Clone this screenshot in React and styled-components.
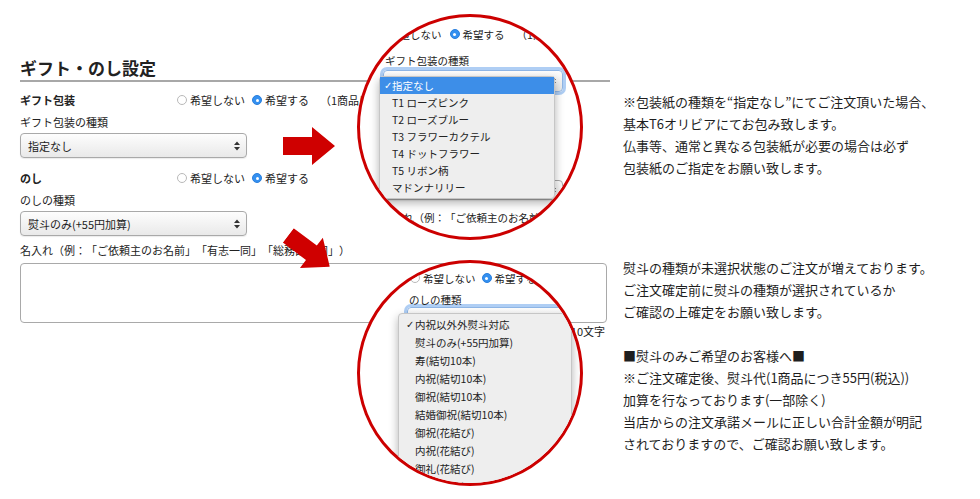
import styled, { createGlobalStyle } from "styled-components";

const GlobalStyle = createGlobalStyle`
  html, body {
    margin: 0;
    padding: 0;
    background: #fff;
  }
  body {
    width: 980px;
    height: 499px;
    overflow: hidden;
    font-family: "Noto Sans CJK JP", "Noto Sans", "DejaVu Sans", sans-serif;
    color: #222;
    text-spacing-trim: space-all;
  }
`;

const Page = styled.div`
  position: relative;
  width: 980px;
  height: 499px;
  display: flex;
  padding-left: 20px;
  box-sizing: border-box;
`;

const Form = styled.div`
  width: 590px;
  padding-top: 56px;
  font-size: 11px;
`;

const Title = styled.h2`
  margin: 0;
  font-size: 17px;
  font-weight: 700;
  line-height: 24px;
  border-bottom: 2px solid #a8a8a8;
`;

const OptionRow = styled.div`
  display: flex;
  align-items: center;
  height: ${(p) => p.$h || 20}px;
  margin-top: ${(p) => p.$mt || 0}px;
  margin-left: ${(p) => p.$ml || 0}px;
  white-space: nowrap;
`;

const RowLabel = styled.div`
  width: 157px;
  font-weight: 700;
`;

const RadioItem = styled.span`
  display: inline-flex;
  align-items: center;
  gap: 3px;
  margin-right: ${(p) => p.$gap || 7}px;
`;

const RadioDot = styled.span`
  position: relative;
  width: 10px;
  height: 10px;
  border-radius: 50%;
  box-sizing: border-box;
  border: 1px solid ${(p) => (p.$checked ? "#2a7fdc" : "#b9b9b9")};
  background: ${(p) => (p.$checked ? "#3490f0" : "#fff")};

  &::after {
    content: "";
    display: ${(p) => (p.$checked ? "block" : "none")};
    position: absolute;
    left: 2.5px;
    top: 2.5px;
    width: 3px;
    height: 3px;
    border-radius: 50%;
    background: #fff;
  }
`;

const PriceNote = styled.span`
  margin-left: 4px;
`;

const FieldLabel = styled.div`
  margin-top: ${(p) => p.$mt || 0}px;
  margin-left: ${(p) => p.$ml || 0}px;
  line-height: ${(p) => p.$lh || 16}px;
  white-space: nowrap;
`;

const SelectBox = styled.div`
  width: ${(p) => p.$w}px;
  height: ${(p) => p.$h || 25}px;
  margin-top: ${(p) => p.$mt || 0}px;
  margin-left: ${(p) => p.$ml || 0}px;
  box-sizing: border-box;
  border: 1px solid ${(p) => (p.$focus ? "#8fb6e6" : "#a9a9a9")};
  border-radius: 4px;
  background: linear-gradient(#fdfdfd, #e9e9e9);
  box-shadow: ${(p) =>
    p.$focus ? "0 0 0 3px rgba(110, 165, 235, 0.55)" : "0 1px 1px rgba(0, 0, 0, 0.08)"};
  display: flex;
  align-items: center;
  justify-content: space-between;
  padding: 0 6px 0 7px;
`;

const NameArea = styled.textarea`
  display: block;
  width: 587px;
  height: 60px;
  margin: 5px 0 0;
  box-sizing: border-box;
  border: 1px solid #a9a9a9;
  border-radius: 4px;
  resize: none;
  background: #fff;
`;

const Counter = styled.div`
  width: 587px;
  margin-top: 1px;
  padding-right: 2px;
  box-sizing: border-box;
  text-align: right;
  line-height: 14px;
`;

const Notes = styled.div`
  margin-left: 13px;
  padding-top: 91px;
  font-size: 13px;
  line-height: 22px;
  color: #1e1e1e;
  white-space: nowrap;
`;

const NoteBlock = styled.p`
  margin: 0 0 ${(p) => p.$mb || 0}px;
`;

const Lens = styled.div`
  position: absolute;
  left: ${(p) => p.$x}px;
  top: ${(p) => p.$y}px;
  width: 226px;
  height: 226px;
  box-sizing: border-box;
  border: 3px solid #cc0000;
  border-radius: 50%;
  overflow: hidden;
  background: #fff;
  font-size: 10.5px;
  color: #222;
`;

const Menu = styled.div`
  position: absolute;
  left: ${(p) => p.$x}px;
  top: ${(p) => p.$y}px;
  width: ${(p) => p.$w}px;
  box-sizing: border-box;
  padding: ${(p) => p.$pad || 0}px 0 2px;
  background: #eeeeee;
  border: 1px solid #c6c6c6;
  border-radius: 4px;
  box-shadow: 0 4px 10px rgba(0, 0, 0, 0.3);
`;

const MenuItem = styled.div`
  position: relative;
  height: ${(p) => p.$h}px;
  line-height: ${(p) => p.$h}px;
  padding-left: ${(p) => p.$indent}px;
  white-space: nowrap;
  background: ${(p) => (p.$active ? "#3d8ee8" : "transparent")};
  color: ${(p) => (p.$active ? "#fff" : "#222")};
`;

const Check = styled.span`
  position: absolute;
  left: ${(p) => p.$x}px;
  top: 0;
  font-family: "DejaVu Sans", sans-serif;
  font-size: 10px;
`;

const ArrowSvg = styled.svg`
  position: absolute;
  left: ${(p) => p.$x}px;
  top: ${(p) => p.$y}px;
  transform: rotate(${(p) => p.$rot || 0}deg);
`;

const UpDown = () => (
  <svg width="6" height="10" viewBox="0 0 6 10">
    <path d="M0 4 L3 0.5 L6 4 Z M0 6 L3 9.5 L6 6 Z" fill="#333" />
  </svg>
);

const Arrow = ({ x, y, rot }) => (
  <ArrowSvg $x={x} $y={y} $rot={rot} width="52" height="38" viewBox="0 0 52 38">
    <path d="M0 10 H29 V0 L52 19 L29 38 V28 H0 Z" fill="#cf0000" />
  </ArrowSvg>
);

const Radios = ({ checked = 1, gap }) => (
  <>
    <RadioItem $gap={gap}>
      <RadioDot $checked={checked === 0} />
      希望しない
    </RadioItem>
    <RadioItem $gap={gap}>
      <RadioDot $checked={checked === 1} />
      希望する
    </RadioItem>
  </>
);

const wrapTypes = ["指定なし", "T1 ローズピンク", "T2 ローズブルー", "T3 フラワーカクテル", "T4 ドットフラワー", "T5 リボン柄", "マドンナリリー"];

const noshiTypes = [
  "内祝以外外熨斗対応",
  "熨斗のみ(+55円加算)",
  "寿(結切10本)",
  "内祝(結切10本)",
  "御祝(結切10本)",
  "結婚御祝(結切10本)",
  "御祝(花結び)",
  "内祝(花結び)",
  "御礼(花結び)",
  "快気祝(結切10本)",
];

export default function App() {
  return (
    <>
      <GlobalStyle />
      <Page>
        <Form>
          <Title>ギフト・のし設定</Title>
          <OptionRow $mt={8}>
            <RowLabel>ギフト包装</RowLabel>
            <Radios />
            <PriceNote>（1商品につき110円）</PriceNote>
          </OptionRow>
          <FieldLabel $mt={4}>ギフト包装の種類</FieldLabel>
          <SelectBox $w={227} $mt={3}>
            指定なし
            <UpDown />
          </SelectBox>
          <OptionRow $mt={10}>
            <RowLabel>のし</RowLabel>
            <Radios />
          </OptionRow>
          <FieldLabel $mt={4}>のしの種類</FieldLabel>
          <SelectBox $w={227} $mt={3}>
            熨斗のみ(+55円加算)
            <UpDown />
          </SelectBox>
          <FieldLabel $mt={6}>名入れ（例：「ご依頼主のお名前」「有志一同」「総務部一同」）</FieldLabel>
          <NameArea readOnly />
          <Counter>0/10文字</Counter>
        </Form>

        <Notes>
          <NoteBlock $mb={78}>
            ※包装紙の種類を“指定なし”にてご注文頂いた場合、
            <br />
            基本T6オリビアにてお包み致します。
            <br />
            仏事等、通常と異なる包装紙が必要の場合は必ず
            <br />
            包装紙のご指定をお願い致します。
          </NoteBlock>
          <NoteBlock>
            熨斗の種類が未選択状態のご注文が増えております。
            <br />
            ご注文確定前に熨斗の種類が選択されているか
            <br />
            ご確認の上確定をお願い致します。
            <br />
            <br />
            ■熨斗のみご希望のお客様へ■
            <br />
            ※ご注文確定後、熨斗代(1商品につき55円(税込))
            <br />
            加算を行なっております(一部除く)
            <br />
            当店からの注文承諾メールに正しい合計金額が明記
            <br />
            されておりますので、ご確認お願い致します。
          </NoteBlock>
        </Notes>

        <Lens $x={357} $y={14}>
          <OptionRow $h={16} $mt={9} $ml={16}>
            <Radios gap={8} />
            <PriceNote>（1商品につき110円）</PriceNote>
          </OptionRow>
          <FieldLabel $mt={12} $ml={25} $lh={14}>ギフト包装の種類</FieldLabel>
          <SelectBox $w={180} $h={22} $mt={2} $ml={23} $focus>
            指定なし
            <UpDown />
          </SelectBox>
          <SelectBox $w={180} $h={20} $mt={88} $ml={23}>
            指定なし
            <UpDown />
          </SelectBox>
          <FieldLabel $mt={11} $ml={22} $lh={14}>名入れ（例：「ご依頼主のお名前」「有志一同」）</FieldLabel>
          <Menu $x={19} $y={59} $w={176}>
            {wrapTypes.map((t, i) => (
              <MenuItem key={t} $h={17} $indent={12} $active={i === 0}>
                {i === 0 && <Check $x={4}>✓</Check>}
                {t}
              </MenuItem>
            ))}
          </Menu>
        </Lens>

        <Lens $x={357} $y={260}>
          <OptionRow $h={16} $mt={7} $ml={50}>
            <Radios gap={6} />
          </OptionRow>
          <FieldLabel $mt={7} $ml={49} $lh={14}>のしの種類</FieldLabel>
          <SelectBox $w={156} $h={22} $ml={47} $focus>
            内祝以外外熨斗対応
            <UpDown />
          </SelectBox>
          <Menu $x={38} $y={50} $w={174} $pad={2}>
            {noshiTypes.map((t, i) => (
              <MenuItem key={t} $h={18} $indent={16}>
                {i === 0 && <Check $x={7}>✓</Check>}
                {t}
              </MenuItem>
            ))}
          </Menu>
        </Lens>

        <Arrow x={283} y={127} />
        <Arrow x={283} y={232} rot={37} />
      </Page>
    </>
  );
}
